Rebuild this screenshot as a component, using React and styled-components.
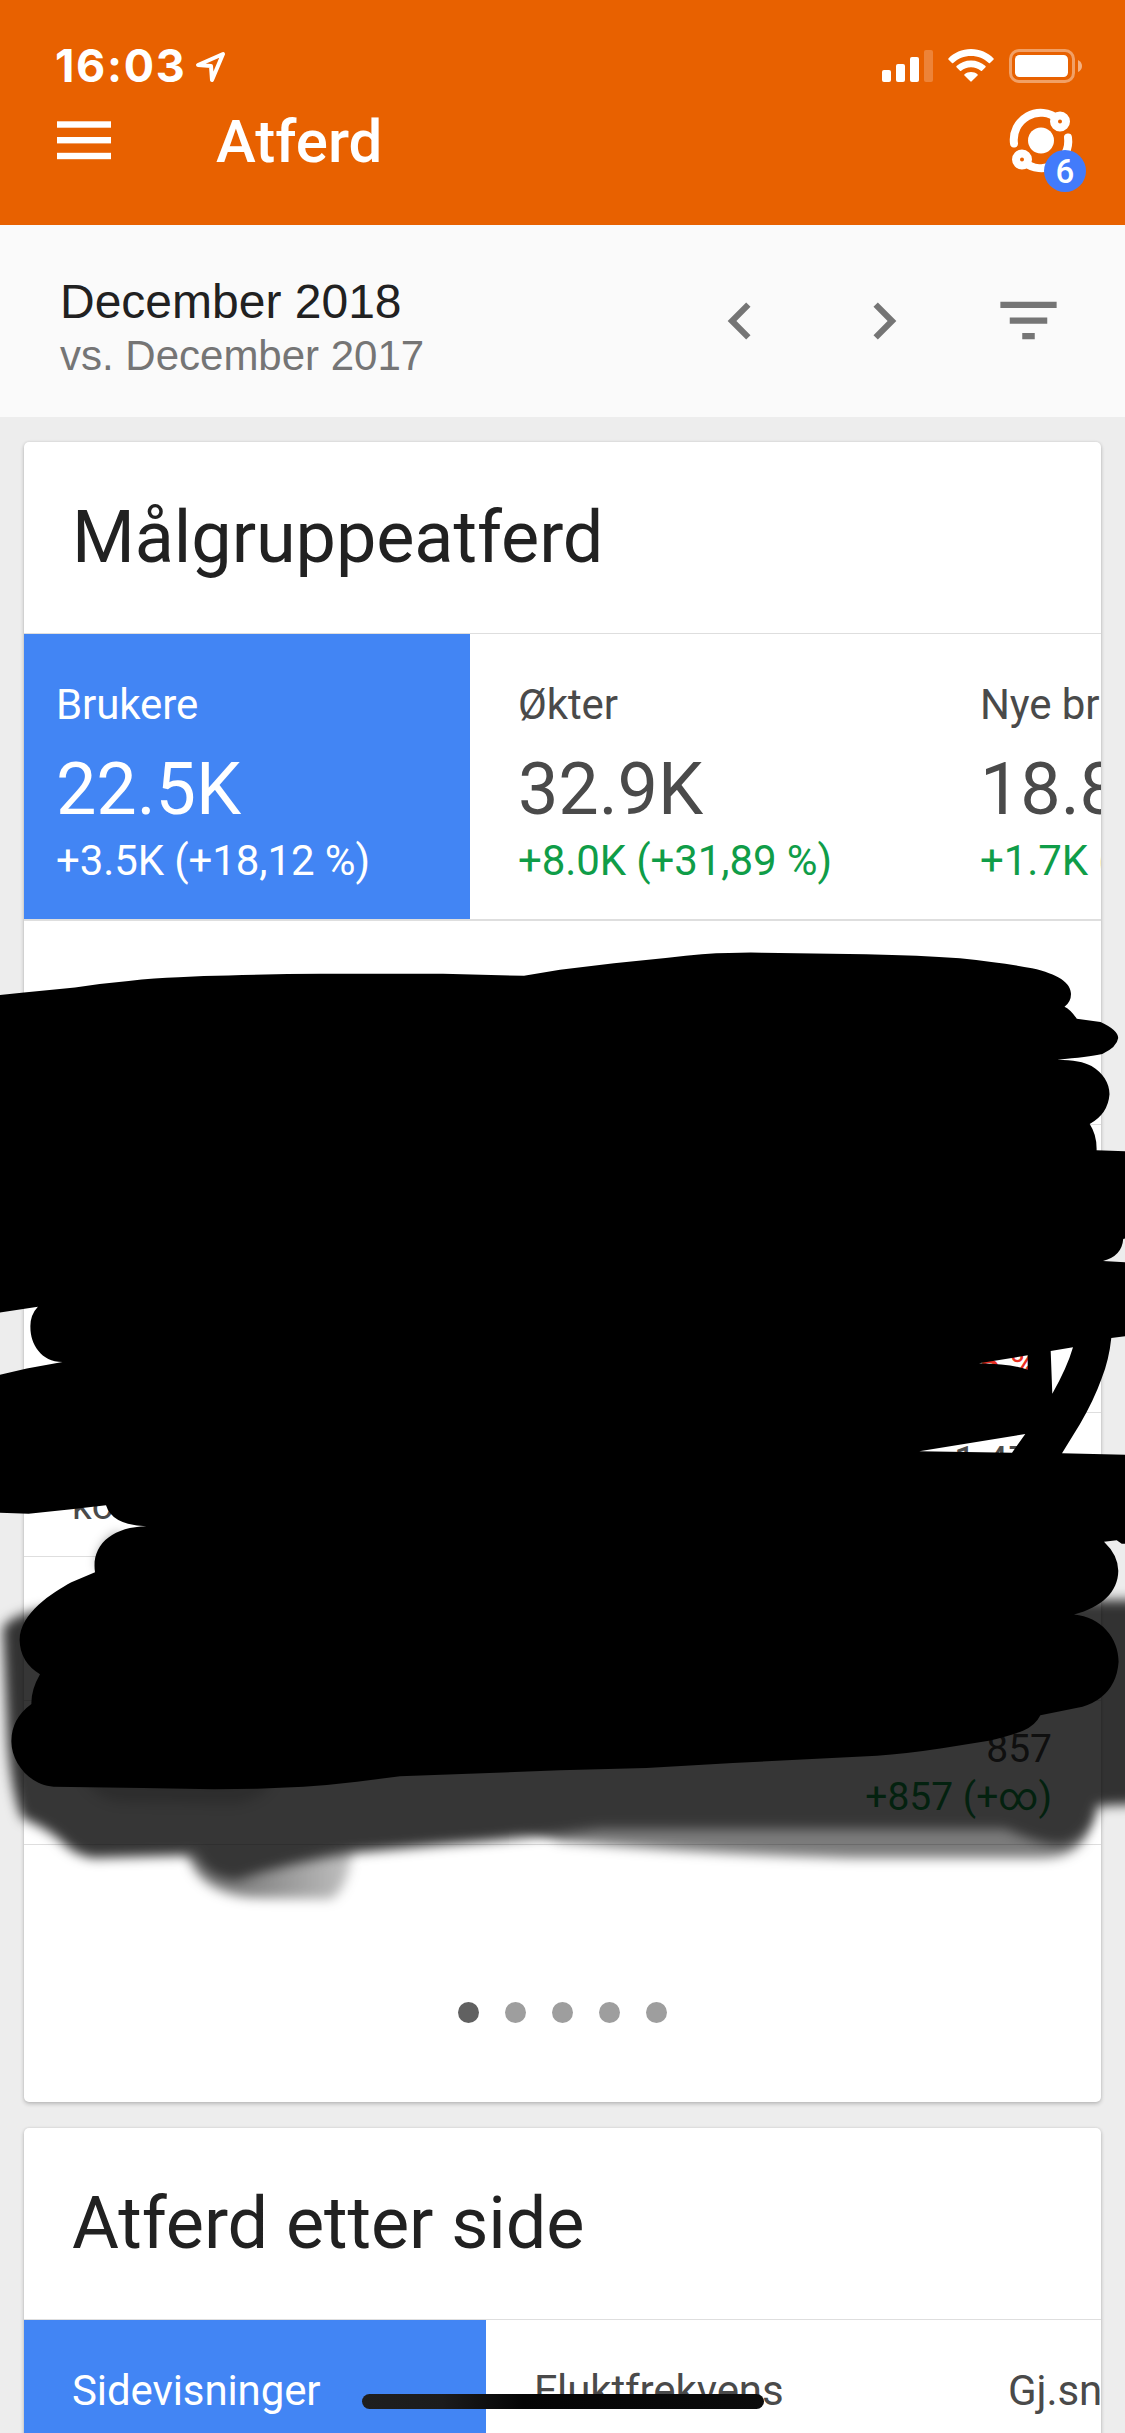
import React from "react";
import styled, { createGlobalStyle } from "styled-components";

const GlobalStyle = createGlobalStyle`
  *, *::before, *::after { box-sizing: border-box; }
  html, body { margin: 0; padding: 0; background: #ededed; }
  body { font-family: Roboto, "Liberation Sans", sans-serif; }
`;

const Screen = styled.div`
  position: relative;
  width: 1125px;
  height: 2433px;
  overflow: hidden;
  background: #ededed;
  display: flex;
  flex-direction: column;
`;

const Header = styled.header`
  flex: none;
  height: 225px;
  background: #e86100;
  color: #fff;
`;

const StatusBar = styled.div`
  height: 96px;
  padding: 38px 42px 0 55px;
  display: flex;
  align-items: flex-start;
  justify-content: space-between;
`;

const StatusGroup = styled.div`
  display: flex;
  align-items: center;
  height: 56px;
  gap: ${(p) => p.$gap}px;
`;

const Clock = styled.span`
  font: 700 45px/56px Inter, sans-serif;
  letter-spacing: 1.7px;
`;

const AppBar = styled.div`
  height: 89px;
  padding: 0 43px 0 57px;
  display: flex;
  align-items: center;
`;

const AppTitle = styled.h1`
  margin: 0 auto 0 105px;
  padding-top: 2px;
  font-size: 60px;
  font-weight: 500;
  line-height: 92px;
`;

const Insights = styled.div`
  position: relative;
  width: 82px;
  height: 90px;
`;

const Badge = styled.span`
  position: absolute;
  left: 44px;
  top: 54px;
  width: 42px;
  height: 42px;
  border-radius: 50%;
  background: #427bfb;
  text-align: center;
  font-size: 33px;
  font-weight: 500;
  line-height: 43px;
`;

const DateBar = styled.section`
  flex: none;
  height: 192px;
  padding: 0 59px 1px 60px;
  background: #fafafa;
  display: flex;
  align-items: center;
  justify-content: space-between;
`;

const DateRange = styled.div`
  padding-top: 14px;
  display: flex;
  flex-direction: column;
  gap: 2px;
  font-family: "Liberation Sans", sans-serif;
`;

const Period = styled.div`
  font-size: 48px;
  line-height: 54px;
  color: #212121;
`;

const Comparison = styled.div`
  font-size: 42px;
  line-height: 50px;
  color: #757575;
`;

const Actions = styled.div`
  display: flex;
  align-items: center;
  gap: 70px;
  color: #757575;
`;

const Cards = styled.main`
  padding: 25px 24px 0 24px;
  display: flex;
  flex-direction: column;
  gap: 26px;
`;

const Card = styled.section`
  flex: none;
  height: ${(p) => p.$height}px;
  background: #fff;
  border-radius: 5px;
  overflow: hidden;
  box-shadow: 0 2px 4px rgba(0, 0, 0, 0.2), 0 0 3px rgba(0, 0, 0, 0.1);
`;

const CardTitle = styled.h2`
  margin: 0;
  height: 192px;
  padding-left: 48px;
  border-bottom: 1px solid #dedede;
  font-size: 72px;
  font-weight: 400;
  letter-spacing: -0.08px;
  line-height: 191px;
  color: #212121;
`;

const Metrics = styled.div`
  display: flex;
  height: 287px;
  border-bottom: 2px solid #dedede;
`;

const Metric = styled.div`
  flex: none;
  width: ${(p) => p.$width}px;
  padding: 47px 0 0 ${(p) => p.$indent || 48}px;
  white-space: nowrap;
  letter-spacing: -0.1px;
  background: ${(p) => (p.$active ? "#4285f4" : "#fff")};
  color: ${(p) => (p.$active ? "#fff" : "#4a4a4a")};
`;

const MetricLabel = styled.div`
  font-size: 42px;
  line-height: 48px;
`;

const MetricValue = styled.div`
  margin: 19px 0 5px;
  font-size: 72px;
  line-height: 84px;
`;

const MetricDelta = styled.div`
  font-size: 42px;
  line-height: 48px;
  color: ${(p) => (p.$active ? "#fff" : "#0f9d48")};
`;

const TableHead = styled.div`
  height: 204px;
  border-bottom: 1px solid #dedede;
`;

const Row = styled.div`
  height: 144px;
  padding: 0 49px 0 48px;
  border-bottom: 1px solid #dedede;
  display: flex;
  align-items: center;
  justify-content: space-between;
  font-size: 39px;
  color: #4a4a4a;
`;

const RowLabel = styled.div`
  align-self: flex-end;
  padding-bottom: 27px;
  line-height: 46px;
`;

const RowFigures = styled.div`
  margin-left: auto;
  padding-top: 2px;
  text-align: right;
  line-height: 47.5px;
`;

const RowDelta = styled.div`
  min-height: 47.5px;
  color: ${(p) => (p.$negative ? "#ea2f22" : "#0f9d48")};
`;

const Pager = styled.div`
  padding-top: 157px;
  display: flex;
  justify-content: center;
  gap: 26.2px;
`;

const Dot = styled.span`
  width: 21px;
  height: 21px;
  border-radius: 50%;
  background: ${(p) => (p.$active ? "#616161" : "#9e9e9e")};
`;

const Ink = styled.svg`
  position: absolute;
  left: 0;
  top: 0;
  pointer-events: none;
`;

const HomeIndicator = styled.div`
  position: absolute;
  left: 362px;
  bottom: 24px;
  width: 402px;
  height: 15px;
  border-radius: 8px;
  background: linear-gradient(90deg, #1f1f1f 0, #1c1c1c 20%, #050505 40%, #0c0c0c 100%);
`;

const users = [
  { label: "Brukere", value: "22.5K", delta: "+3.5K (+18,12 %)", width: 446, indent: 32, active: true },
  { label: "Økter", value: "32.9K", delta: "+8.0K (+31,89 %)", width: 462 },
  { label: "Nye brukere", value: "18.8K", delta: "+1.7K (", width: 462 },
];

const pages = [
  { label: "Sidevisninger", width: 462, active: true },
  { label: "Fluktfrekvens", width: 474 },
  { label: "Gj.snittlig tid", width: 462 },
];

const rows = [
  {},
  { delta: "5 %)", negative: true },
  { label: "ko", value: "1.472" },
  {},
  { value: "857", delta: "+857 (+∞)" },
];

const strokes = `M0 995.1L24 992.4L75 987.6Q103 983 128.6 980.9Q155 978 178.6 977.3Q204 975.6 228.6 975.4
Q275 974 321 973.8L443 973.8L524 975.8L560 969.7L614 963.3L668 957.7Q705 953 729 953Q745 952.4 762 952.7L866 954.3
Q920 955.5 960 958.3Q1004 963 1032 968.3C1058 974 1071 983 1071 994Q1071 1002 1064.5 1006.7Q1070 1009 1076.8 1018.7
L1100.5 1022Q1118 1030 1118.2 1038Q1117 1047 1102.3 1054Q1088 1057 1057.3 1059.7Q1081 1060 1091.5 1066
C1103 1073 1109.5 1083 1109.5 1094.3Q1108 1114 1089.7 1124Q1097 1135 1096.6 1150.3L1125 1151.3L1125 1238.5L1123.2 1239
Q1122 1256 1103 1261L1125 1262.3L1125 1336.3L1111.3 1338Q1109 1360 1101.7 1378.3Q1094 1400 1080 1424L1062 1453.3
L1125 1454.7L1125 1543.7L1121.7 1543.7L1116.7 1540.3L1104 1541.7Q1118 1555 1118.3 1570.7C1118 1592 1102 1607 1074 1614.5
C1101 1617 1118.6 1638 1118.6 1661.7Q1117 1685 1100.5 1697.7Q1094 1703 1082.5 1706.7L1040.4 1715.3Q1035 1726 1023 1730.7
Q1013 1735 988.8 1740.7L942 1748.3Q905 1754 877 1755.7L733 1763L646.5 1768L560 1770.3L400 1776.3L357 1781.7
Q330 1785 303.6 1786.7L257 1788.7L214 1789.3L143 1788L53.6 1786.7C29 1785 11.4 1762 11.4 1741.7Q11 1719 31.4 1704
Q31 1690 40 1674.3Q20 1662 19.6 1640C20 1613 52 1593 71.4 1582.3L95 1572.3C91 1545 112 1527 146.4 1526.3
Q112 1525 106 1505.3L71.4 1509.3L28.6 1513.7L0 1512.7L0 1374.7L26.8 1368.4L62.5 1362C41 1362 30.4 1344 30.4 1327.3
Q30 1315 37.9 1306.7L0 1312.6Z
M979 1363.3L1027.7 1355.3L1027.7 1369.7Q1013 1364 979 1363.3Z
M1050.7 1351L1073 1347.3Q1067 1368 1052.3 1393.7Z
M919.3 1451.3L1025.3 1434L1012 1452.7Z`;

const markerBody = `M3 1628Q10 1616 40 1610L100 1600L1140 1600L1140 1804L1098 1806Q1090 1835 1066 1844Q1050 1848 1005 1829
L600 1829Q520 1839 440 1845L352 1853Q290 1862 236 1880Q206 1878 196 1855L92 1858Q72 1854 60 1840Q46 1828 22 1818Q12 1795 8 1745Z`;

const markerTail = "M186 1845Q192 1896 262 1898L330 1899Q348 1892 353 1845Z";
const markerEdge = "M500 1815L1090 1810Q1092 1858 1040 1858L850 1858Q700 1854 560 1841Z";

function MenuIcon() {
  return (
    <svg width="54" height="39" viewBox="0 0 54 39" fill="currentColor">
      <rect y="0.3" width="54" height="6.4" />
      <rect y="16" width="54" height="6.4" />
      <rect y="31.8" width="54" height="6.4" />
    </svg>
  );
}

function LocationIcon() {
  return (
    <svg width="31" height="32" viewBox="0 0 31 32" fill="none" stroke="currentColor" strokeWidth="4" strokeLinejoin="round">
      <path d="M3 15L28 4L17 30L16 16Z" />
    </svg>
  );
}

function SignalIcon() {
  return (
    <svg width="51" height="34" viewBox="0 0 51 34" fill="currentColor">
      <rect x="0" y="21" width="9" height="12" rx="2" />
      <rect x="14" y="15" width="9" height="18" rx="2" />
      <rect x="28" y="8" width="9" height="25" rx="2" />
      <rect x="42" y="1" width="9" height="32" rx="2" opacity="0.22" />
    </svg>
  );
}

function WifiIcon() {
  return (
    <svg width="46" height="34" viewBox="0 0 46 34" fill="currentColor">
      <path d="M23 0C14 0 6 3.700 .4 9.400Q0 10 .4 10.600L4 14Q4.600 14.500 5.200 14C10 9.500 16 7 23 7S36 9.500 40.800 14Q41.400 14.500 42 14L45.600 10.600Q46 10 45.600 9.400C40 3.700 32 0 23 0Z" />
      <path d="M23 11.500C17.500 11.500 12.500 13.500 8.500 17Q8 17.600 8.500 18.200L12 21.800Q12.600 22.300 13.200 21.800C16 19.500 19 18.300 23 18.300S30 19.500 32.800 21.800Q33.400 22.300 34 21.800L37.500 18.200Q38 17.600 37.500 17C33.500 13.500 28.500 11.500 23 11.500Z" />
      <path d="M23 23C20.500 23 18.300 23.800 16.500 25.200Q16 25.800 16.500 26.400L22.300 32.300Q23 33 23.700 32.300L29.500 26.400Q30 25.800 29.500 25.200C27.700 23.800 25.500 23 23 23Z" />
    </svg>
  );
}

function BatteryIcon() {
  return (
    <svg width="74" height="34" viewBox="0 0 74 34" fill="currentColor">
      <rect x="1.500" y="1.500" width="63" height="31" rx="8.500" fill="none" stroke="currentColor" strokeWidth="3" opacity="0.4" />
      <rect x="6" y="6" width="53" height="22" rx="4.500" />
      <path d="M69 11Q73 13 73 17T69 23Z" opacity="0.5" />
    </svg>
  );
}

function InsightsIcon() {
  return (
    <svg width="82" height="90" viewBox="0 0 82 90" fill="none" stroke="currentColor">
      <path d="M14 47.500A27 27 0 0 1 58 23" strokeWidth="8" strokeLinecap="round" />
      <path d="M68 41.500A27 27 0 0 1 24 66" strokeWidth="8" strokeLinecap="round" />
      <circle cx="41" cy="44.500" r="13" fill="currentColor" stroke="none" />
      <circle cx="60" cy="25.500" r="6" strokeWidth="8" fill="#e86100" />
      <circle cx="22" cy="63.500" r="6" strokeWidth="8" fill="#e86100" />
    </svg>
  );
}

function Chevron({ d }) {
  return (
    <svg width="74" height="74" viewBox="0 0 24 24" fill="currentColor">
      <path d={d} />
    </svg>
  );
}

function FilterIcon() {
  return (
    <svg width="75" height="75" viewBox="0 0 24 24" fill="currentColor">
      <path d="M10 18h4v-2h-4v2zM3 6v2h18V6H3zm3 7h12v-2H6v2z" />
    </svg>
  );
}

function MetricCell({ item }) {
  return (
    <Metric $width={item.width} $indent={item.indent} $active={item.active}>
      <MetricLabel>{item.label}</MetricLabel>
      {item.value && <MetricValue>{item.value}</MetricValue>}
      {item.delta && <MetricDelta $active={item.active}>{item.delta}</MetricDelta>}
    </Metric>
  );
}

function InkLayer() {
  return (
    <Ink width="1125" height="2433" viewBox="0 0 1125 2433">
      <defs>
        <filter id="soft" filterUnits="userSpaceOnUse" x="-40" y="1500" width="1220" height="450" colorInterpolationFilters="sRGB">
          <feGaussianBlur stdDeviation="6" />
        </filter>
        <linearGradient id="fade" gradientUnits="userSpaceOnUse" x1="240" y1="0" x2="355" y2="0">
          <stop offset="0" stopColor="#fff" stopOpacity="0.64" />
          <stop offset="1" stopColor="#fff" stopOpacity="0.3" />
        </linearGradient>
        <mask id="marker" maskUnits="userSpaceOnUse" x="0" y="1500" width="1125" height="450">
          <path d={markerTail} fill="url(#fade)" filter="url(#soft)" />
          <path d={markerEdge} fill="#fff" fillOpacity="0.66" filter="url(#soft)" />
          <path d={markerBody} fill="#fff" filter="url(#soft)" />
        </mask>
      </defs>
      <rect y="1500" width="1125" height="450" fillOpacity="0.79" mask="url(#marker)" />
      <path d="M80 1770L275 1770Q272 1798 235 1804L120 1802Q90 1798 80 1770Z" fillOpacity="0.17" filter="url(#soft)" />
      <path d="M120 1533Q98 1542 98 1568L130 1568Z" fillOpacity="0.5" filter="url(#soft)" />
      <path d={strokes} fillRule="evenodd" />
    </Ink>
  );
}

export default function App() {
  return (
    <Screen>
      <GlobalStyle />
      <Header>
        <StatusBar>
          <StatusGroup $gap={8}>
            <Clock>16:03</Clock>
            <LocationIcon />
          </StatusGroup>
          <StatusGroup $gap={15}>
            <SignalIcon />
            <WifiIcon />
            <BatteryIcon />
          </StatusGroup>
        </StatusBar>
        <AppBar>
          <MenuIcon />
          <AppTitle>Atferd</AppTitle>
          <Insights>
            <InsightsIcon />
            <Badge>6</Badge>
          </Insights>
        </AppBar>
      </Header>
      <DateBar>
        <DateRange>
          <Period>December 2018</Period>
          <Comparison>vs. December 2017</Comparison>
        </DateRange>
        <Actions>
          <Chevron d="M15.41 7.41L14 6l-6 6 6 6 1.41-1.41L10.83 12z" />
          <Chevron d="M10 6L8.59 7.41 13.17 12l-4.58 4.59L10 18l6-6z" />
          <FilterIcon />
        </Actions>
      </DateBar>
      <Cards>
        <Card $height={1660}>
          <CardTitle>Målgruppeatferd</CardTitle>
          <Metrics>
            {users.map((item) => <MetricCell key={item.label} item={item} />)}
          </Metrics>
          <TableHead />
          {rows.map((row, i) => (
            <Row key={i}>
              {row.label && <RowLabel>{row.label}</RowLabel>}
              <RowFigures>
                <div>{row.value || "\u00a0"}</div>
                <RowDelta $negative={row.negative}>{row.delta}</RowDelta>
              </RowFigures>
            </Row>
          ))}
          <Pager>
            {[0, 1, 2, 3, 4].map((i) => <Dot key={i} $active={i === 0} />)}
          </Pager>
        </Card>
        <Card $height={360}>
          <CardTitle>Atferd etter side</CardTitle>
          <Metrics>
            {pages.map((item) => <MetricCell key={item.label} item={item} />)}
          </Metrics>
        </Card>
      </Cards>
      <InkLayer />
      <HomeIndicator />
    </Screen>
  );
}
